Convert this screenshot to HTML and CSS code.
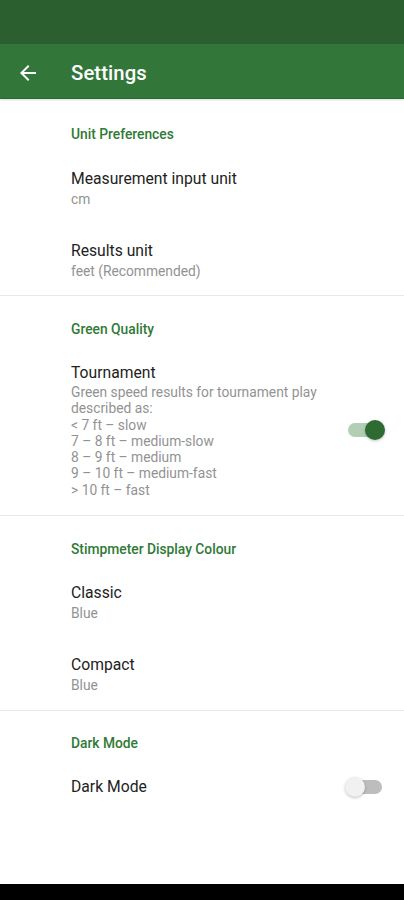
FILE: index.html
```html
<!DOCTYPE html>
<html lang="en">
<head>
<meta charset="utf-8">
<title>Settings</title>
<link rel="stylesheet" href="styles.css">
</head>
<body>
<div class="screen">
  <div class="status-bar"></div>
  <header class="app-bar">
    <svg class="back" viewBox="0 0 24 24" width="24" height="24"><path d="M20 11H7.83l5.59-5.59L12 4l-8 8 8 8 1.41-1.41L7.83 13H20v-2z" fill="#fff"/></svg>
    <h1 class="title">Settings</h1>
  </header>
  <main class="list">
    <section class="group">
      <div class="cat first">Unit Preferences</div>
      <div class="item"><div class="text"><div class="item-title">Measurement input unit</div><div class="summary">cm</div></div></div>
      <div class="item short"><div class="text"><div class="item-title">Results unit</div><div class="summary">feet (Recommended)</div></div></div>
    </section>
    <section class="group">
      <div class="cat">Green Quality</div>
      <div class="item tall">
        <div class="text">
          <div class="item-title">Tournament</div>
          <div class="summary multi">Green speed results for tournament play<br>described as:<br>&lt; 7 ft – slow<br>7 – 8 ft – medium-slow<br>8 – 9 ft – medium<br>9 – 10 ft – medium-fast<br>&gt; 10 ft – fast</div>
        </div>
        <div class="switch on"><span class="track"></span><span class="thumb"></span></div>
      </div>
    </section>
    <section class="group">
      <div class="cat">Stimpmeter Display Colour</div>
      <div class="item"><div class="text"><div class="item-title">Classic</div><div class="summary">Blue</div></div></div>
      <div class="item"><div class="text"><div class="item-title">Compact</div><div class="summary">Blue</div></div></div>
    </section>
    <section class="group last">
      <div class="cat">Dark Mode</div>
      <div class="item single">
        <div class="text"><div class="item-title">Dark Mode</div></div>
        <div class="switch off"><span class="track"></span><span class="thumb"></span></div>
      </div>
    </section>
  </main>
  <div class="nav-bar"></div>
</div>
</body>
</html>
```
FILE: styles.css
```css
* { box-sizing: border-box; }
html, body { margin: 0; padding: 0; }
body {
  width: 404px;
  height: 900px;
  font-family: Roboto, "Liberation Sans", sans-serif;
  background: #fff;
  overflow: hidden;
}
.screen {
  display: flex;
  flex-direction: column;
  height: 900px;
}
.status-bar {
  height: 44px;
  background: #2c5f2f;
  flex: none;
}
.app-bar {
  height: 55px;
  background: #33763a;
  display: flex;
  align-items: center;
  padding: 3px 0 0 16px;
  border-bottom: 1px solid #2a6a30;
  box-shadow: 0 1px 2px rgba(0,0,0,0.15);
  flex: none;
  position: relative;
  z-index: 1;
}
.back { display: block; flex: none; }
.title {
  margin: 0 0 0 31px;
  color: #fff;
  font-size: 20.3px;
  font-weight: 500;
  letter-spacing: 0.1px;
}
.list {
  flex: 1;
  display: flex;
  flex-direction: column;
}
.group { border-bottom: 1px solid #e8e8e8; }
.group.last { border-bottom: none; }
.cat {
  padding: 25px 16px 9px 71px;
  line-height: 16px;
  font-size: 13.8px;
  font-weight: 500;
  color: #2f7a36;
}
.cat.first { padding-top: 27px; padding-bottom: 10px; }
.group.last .cat { padding-top: 24px; }
.item {
  display: flex;
  align-items: center;
  padding: 16px 22px 16px 71px;
  min-height: 72px;
}
.item.short { min-height: 71px; padding-bottom: 15px; }
.item.tall { padding-bottom: 17px; }
.item.single { min-height: 0; padding-top: 16px; padding-bottom: 16px; }
.text { flex: 1; min-width: 0; }
.item-title {
  font-size: 15.7px;
  line-height: 22px;
  color: #222;
}
.summary {
  font-size: 13.8px;
  line-height: 18px;
  color: #929292;
}
.summary.multi { line-height: 16.3px; white-space: nowrap; }
.switch {
  position: relative;
  width: 34px;
  height: 20px;
  flex: none;
  margin-left: 16px;
}
.track {
  position: absolute;
  left: 0; right: 0; top: 3px;
  height: 14px;
  border-radius: 7px;
}
.thumb {
  position: absolute;
  top: 0;
  width: 20px; height: 20px;
  border-radius: 50%;
  box-shadow: 0 1px 3px rgba(0,0,0,0.25);
}
.switch.on .track { background: #b2cfb4; }
.switch.on .thumb { right: -3px; background: #2d6b32; }
.switch.off .track { background: #bdbdbd; }
.switch.off .thumb { left: -3px; background: #f1f1f1; }
.nav-bar {
  height: 16px;
  background: #000;
  flex: none;
}
```
